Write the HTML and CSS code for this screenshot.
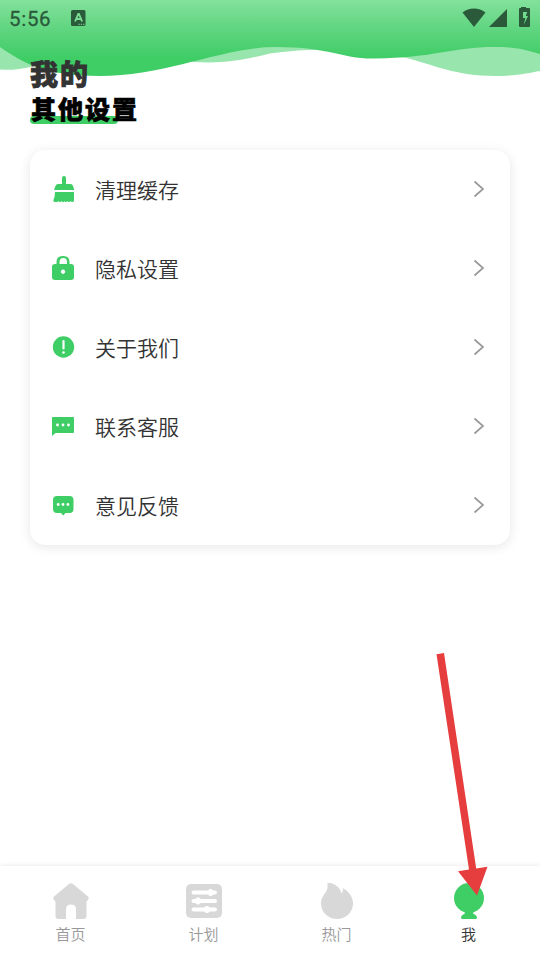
FILE: index.html
```html
<!DOCTYPE html>
<html lang="zh-CN">
<head>
<meta charset="utf-8">
<title>我的</title>
<link rel="stylesheet" href="styles.css">
</head>
<body>
<div class="app">
  <svg class="wave" viewBox="0 0 540 80" width="540" height="80">
    <defs><linearGradient id="g" x1="0" y1="0" x2="0" y2="58" gradientUnits="userSpaceOnUse"><stop offset="0" stop-color="#83e19c"/><stop offset=".5" stop-color="#60d580"/><stop offset="1" stop-color="#3fcd66"/></linearGradient></defs>
    <path fill="#98e5ad" d="M0 40V69.500C18 71 30 67 45 63L180 60C215 66 244 60 270 53.500C295 50 315 49 328 51L405 57.500C434 65 456 76 495 76C515 76 529 73 540 71V40Z"/>
    <path fill="url(#g)" d="M0 0H540V54C522 48 510 47 493 47C455 47 432 58 375 58.500C339 59 334 47 275 47C223 47 166 76 100 76C45 76 23 63 0 47Z"/>
  </svg>
  <header class="status">
    <span class="clock">5:56</span>
    <svg class="ime" width="16" height="17" viewBox="0 0 16 17"><rect width="14.500" height="16" rx="1.500" fill="#2a5a3a"/><path d="M4.100 11.500 7.300 4h.6l3.200 7.500M5.500 9h4.200" fill="none" stroke="#7bdc96" stroke-width="1.900"/><path d="M7.500 14.300h6.500" stroke="#7bdc96" stroke-width="1" stroke-dasharray="1.300 1"/></svg>
    <svg class="signals" width="70" height="22" viewBox="0 0 70 22" fill="#2a5a3a"><path d="M.5 6.500C7 1.200 17 1.200 23.500 6.500L12 21Z"/><path d="M27 21 45 3V21Z"/><path fill-rule="evenodd" d="M59 2V1h5v1h3q1 0 1 1v17q0 1-1 1H58q-1 0-1-1V3q0-1 1-1ZM61 6v6h2.300L61.800 19 66 10h-2.300l1.500-4Z"/></svg>
  </header>
  <main>
    <h1>我的</h1>
    <h2><span>其他设置</span></h2>
    <section class="card">
      <div class="row"><svg class="icon" viewBox="0 0 24 28"><path d="M10 9V3a2 2 0 0 1 4 0v6h4.500q2 0 2.500 2l1.300 4H2l1.500-4q.7-2 2.500-2ZM3 17H22V25.500q0 1.500-2 1.500l-1.500-.8-1.500 1-1.500-1-1.500 1-1.500-1-1.500 1-1.500-1-1.500 1-1.500-1-1.500.8H3.500Q1 27 1.400 25 3 22 3 17Z"/></svg><span>清理缓存</span><svg class="chevron" viewBox="0 0 12 18"><path d="m1.500 1.500 8.500 7.500L1.500 16.500"/></svg></div>
      <div class="row"><svg class="icon" viewBox="0 0 24 28"><path fill-rule="evenodd" d="M3 10h1.500V8q0-6 6-6h1q6 0 6 6v2H19q3 0 3 3v10q0 3-3 3H3q-3 0-3-3V13q0-3 3-3Zm4.500 0h7.500V8q0-4-3.700-4T7.500 8Zm3.500 5.500a2.200 2.200 0 1 0 .1 0Z"/></svg><span>隐私设置</span><svg class="chevron" viewBox="0 0 12 18"><path d="m1.500 1.500 8.500 7.500L1.500 16.500"/></svg></div>
      <div class="row"><svg class="icon" viewBox="0 0 24 28"><circle cx="11.500" cy="14" r="10.700"/><path d="M11.500 8v7.500" stroke="#fff" stroke-width="2.200" stroke-linecap="round"/><circle cx="11.500" cy="19.500" r="1.300" fill="#fff"/></svg><span>关于我们</span><svg class="chevron" viewBox="0 0 12 18"><path d="m1.500 1.500 8.500 7.500L1.500 16.500"/></svg></div>
      <div class="row"><svg class="icon" viewBox="0 0 24 28"><path d="M1 5H21q1 0 1 1V20q0 1-1 1H3.500L0 24V6q0-1 1-1Z"/><g fill="#fff"><circle cx="5.500" cy="13" r="1.400"/><circle cx="11" cy="13" r="1.400"/><circle cx="16.500" cy="13" r="1.400"/></g></svg><span>联系客服</span><svg class="chevron" viewBox="0 0 12 18"><path d="m1.500 1.500 8.500 7.500L1.500 16.500"/></svg></div>
      <div class="row"><svg class="icon" viewBox="0 0 24 28"><path d="M5 5H17.500Q21.500 5 21.500 9V18Q21.500 22 17.500 22H13.500L11.200 24.500 9 22H5Q1 22 1 18V9Q1 5 5 5Z"/><g fill="#fff"><circle cx="6.200" cy="13.500" r="1.400"/><circle cx="11" cy="13.500" r="1.400"/><circle cx="15.900" cy="13.500" r="1.400"/></g></svg><span>意见反馈</span><svg class="chevron" viewBox="0 0 12 18"><path d="m1.500 1.500 8.500 7.500L1.500 16.500"/></svg></div>
    </section>
  </main>
  <nav class="tabs">
    <div class="tab"><svg viewBox="0 0 36 38"><path d="M16 2q2-1.500 4 0L35 14.500q1.500 2-.5 4l-1 1V34q0 3-3 3H23V27q0-4.500-5-4.500t-5 4.500V37H5.500q-3 0-3-3V19.500l-1-1q-2-2-.5-4Z"/></svg><span>首页</span></div>
    <div class="tab"><svg viewBox="0 0 36 38"><rect y="2" width="36" height="34" rx="5"/><g stroke="#fff" stroke-width="4" stroke-linecap="round"><path d="M7.500 10.500H29M7.500 19H29M7.500 27.500H29"/></g><g fill="#fff"><path d="m20.500 10.500 3-3.500h2l4 3.500-4 3.500h-2ZM7 19l4-3.500h2L17 19l-4 3.500h-2ZM16 27.500l4-3.500h2l4 3.500-4 3.500h-2Z"/></g></svg><span>计划</span></div>
    <div class="tab"><svg viewBox="0 0 36 38"><path d="M8.500 1Q12 .5 15 2.200C19 4.500 21.500 7 22.500 11.500Q24.500 9 24 6C30 9.500 34 15 34 21.500C34 30 27 37 18 37S2 30 2 21.500C2 13 8.500 11 8.500 5Z"/></svg><span>热门</span></div>
    <div class="tab active"><svg viewBox="0 0 36 38"><circle cx="18" cy="16" r="15"/><path d="M13 29h10l-1 2.500q4 2 4 4 0 1.500-1.500 1.500h-13Q10 37 10 35.500q0-2 4-4Z"/></svg><span>我</span></div>
  </nav>
  <svg class="pointer" viewBox="0 0 52 244"><path fill="#e63e3e" d="M.5 1.200 8 0 40.200 215.500 51.500 213.800 41 242.500 22 218.300 33 216.600Z"/></svg>
</div>
</body>
</html>
```
FILE: styles.css
```css
* { box-sizing: border-box; }
body { margin: 0; background: #fff; font-family: "Noto Sans CJK SC", sans-serif; color: #333; }
.app { position: relative; width: 540px; height: 960px; display: flex; flex-direction: column; overflow: hidden; }
.wave { position: absolute; top: 0; left: 0; }
.status { position: relative; height: 38px; display: flex; align-items: flex-start; padding: 0 8px 0 9px; color: #2a5a3a; }
.clock { width: 62px; padding-top: 7px; font: 400 20.500px/24px Roboto, sans-serif; letter-spacing: .7px; -webkit-text-stroke: .3px #2a5a3a; }
.ime { margin-top: 10px; }
.signals { margin: 6px 0 0 auto; }
main { position: relative; flex: 1; padding: 18px 30px 0; }
h1, h2 { margin: 0; font-weight: 900; white-space: nowrap; }
h1 { height: 36px; font-size: 28px; line-height: 34px; letter-spacing: 2px; -webkit-text-stroke: .8px #333; }
h2 { position: relative; height: 32px; font-size: 25px; line-height: 32px; letter-spacing: 2px; color: #000; -webkit-text-stroke: .7px #000; }
h2::before { content: ""; position: absolute; left: 0; bottom: 0; width: 88px; height: 8px; border-radius: 4px; background: #3fcd66; }
h2 span { position: relative; left: 1px; }
.card { margin-top: 26px; height: 395px; border-radius: 15px; background: #fff; box-shadow: 0 2px 12px rgba(0, 0, 0, .1); }
.row { height: 79px; display: flex; align-items: center; padding: 0 25px 2px 22px; font-size: 21px; font-weight: 350; }
.row span { flex: 1; margin-left: 19px; line-height: 30px; }
.icon { width: 24px; height: 28px; fill: #3fcd66; }
.chevron { width: 12px; height: 18px; fill: none; stroke: #999; stroke-width: 1.700; }
.tabs { height: 94px; display: flex; padding: 16px 4px 0; background: #fff; box-shadow: 0 -1px 4px rgba(0, 0, 0, .08); position: relative; }
.tab { width: 133px; display: flex; flex-direction: column; align-items: center; color: #999; font-size: 15px; font-weight: 350; line-height: 22px; }
.tab svg { width: 36px; height: 38px; fill: #d8d8d8; margin-bottom: 3px; }
.tabs .active { width: 131px; color: #333; }
.tabs .active svg { fill: #3fcd66; }
.pointer { position: absolute; left: 436px; top: 653px; width: 52px; height: 244px; }
```
